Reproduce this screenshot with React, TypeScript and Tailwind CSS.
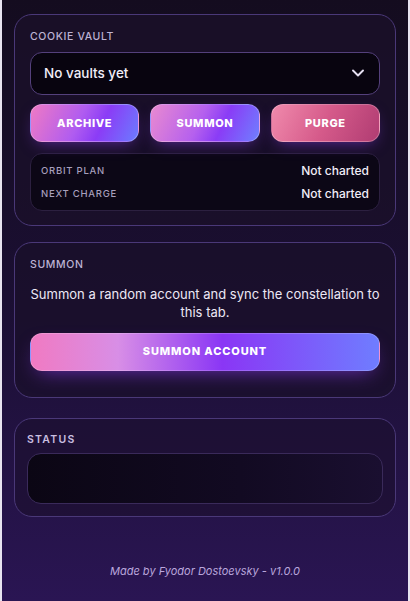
import { ChevronDown } from 'lucide-react'

const FONT = { fontFamily: 'Inter, "Open Sans", "DejaVu Sans", sans-serif' }

function SectionLabel(props: { children: string; strong?: boolean }) {
  return (
    <div
      className={
        props.strong
          ? 'text-[10.5px] font-semibold uppercase tracking-[0.12em] text-[#c9bfe0]'
          : 'text-[10.5px] font-medium uppercase tracking-[0.06em] text-[#bdb3d4]'
      }
    >
      {props.children}
    </div>
  )
}

function ActionButton(props: { label: string; gradient: string }) {
  return (
    <button
      className={`h-[38px] rounded-[12px] border border-white/25 text-[11px] font-extrabold uppercase tracking-[0.06em] text-white shadow-[0_6px_16px_-6px_rgba(140,60,240,0.6)] ${props.gradient}`}
    >
      {props.label}
    </button>
  )
}

function InfoRow(props: { label: string; value: string }) {
  return (
    <div className="flex items-center justify-between leading-[15px]">
      <span className="text-[9.5px] font-medium uppercase tracking-[0.08em] text-[#a79fbc]">{props.label}</span>
      <span className="text-[12px] font-medium text-[#f1edf8]">{props.value}</span>
    </div>
  )
}

export default function App() {
  return (
    <div
      style={FONT}
      className="flex h-[601px] w-[410px] flex-col border-x-2 border-x-[#e8e4f0] bg-gradient-to-b from-[#140c1f] via-[#1b0f33] to-[#2a1553] px-[12px] pt-[14px]"
    >
      <section className="rounded-[18px] border border-[#4a3878] bg-[#1a1029]/80 px-[15px] pb-[14px] pt-[14px]">
        <SectionLabel>Cookie Vault</SectionLabel>
        <div className="mt-[7px] flex h-[43px] items-center justify-between rounded-[12px] border border-[#54407c] bg-[#08040f] pl-[13px] pr-[11px]">
          <span className="text-[13.5px] font-medium text-[#f2eef9]">No vaults yet</span>
          <ChevronDown className="h-[20px] w-[20px] text-[#e6e0f2]" strokeWidth={2.3} />
        </div>
        <div className="mt-[9px] grid grid-cols-3 gap-[11px]">
          <ActionButton label="Archive" gradient="bg-[linear-gradient(115deg,#ef7ac4_0%,#b05cf0_45%,#8b3cf6_65%,#6b7cff_100%)]" />
          <ActionButton label="Summon" gradient="bg-[linear-gradient(115deg,#e98ad0_0%,#b560ee_45%,#8a3cf6_65%,#6f80ff_100%)]" />
          <ActionButton label="Purge" gradient="bg-[linear-gradient(115deg,#f08aac_0%,#d55a8a_50%,#b03c72_100%)]" />
        </div>
        <div className="mt-[11px] flex flex-col gap-[8px] rounded-[12px] border border-[#2c2040] bg-[#0c0716] px-[10px] py-[9px]">
          <InfoRow label="Orbit plan" value="Not charted" />
          <InfoRow label="Next charge" value="Not charted" />
        </div>
      </section>

      <section className="mt-[16px] rounded-[18px] border border-[#4a3878] bg-[#1a1029]/70 px-[15px] pb-[26px] pt-[14px]">
        <SectionLabel>Summon</SectionLabel>
        <p className="mt-[12px] text-center text-[13px] leading-[18px] text-[#ece7f5]">
          Summon a random account and sync the constellation to this tab.
        </p>
        <button className="mt-[12px] h-[38px] w-full rounded-[12px] border border-white/20 bg-[linear-gradient(90deg,#f07ac2_0%,#d88ee6_25%,#8a36f5_55%,#6f7dff_100%)] text-[11px] font-extrabold uppercase tracking-[0.08em] text-white shadow-[0_8px_20px_-8px_rgba(140,60,240,0.7)]">
          Summon Account
        </button>
      </section>

      <section className="mt-[20px] rounded-[18px] border border-[#4a3878] bg-[#1d1030]/70 px-[12px] pb-[12px] pt-[13px]">
        <SectionLabel strong>Status</SectionLabel>
        <div className="mt-[6px] h-[51px] rounded-[14px] border border-[#3a2a5a] bg-[linear-gradient(90deg,#0b0614_0%,#120a22_60%,#1a0f30_100%)]" />
      </section>

      <footer className="mt-[46px] text-center text-[11px] italic text-[#b9a6dc]">
        Made by Fyodor Dostoevsky - v1.0.0
      </footer>
    </div>
  )
}
